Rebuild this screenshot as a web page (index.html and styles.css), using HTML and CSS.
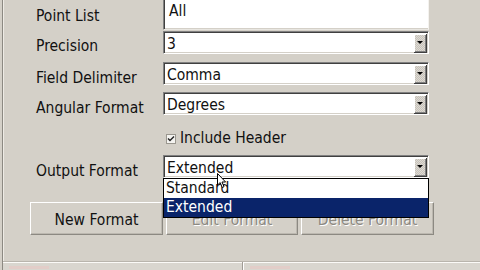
FILE: index.html
```html
<!DOCTYPE html>
<html lang="en">
  <head>
    <meta charset="UTF-8" />
    <meta name="viewport" content="width=device-width, initial-scale=1.0" />
    <title>Export Points</title>
    <link rel="stylesheet" href="styles.css">
  </head>
  <body>
    <div class="window">
      <div class="form">
        <div class="row row-first">
          <div class="label">Point List</div>
          <div class="textbox">All</div>
        </div>
        <div class="row row-precision">
          <div class="label">Precision</div>
          <div class="combo">
            <span class="combo-value">3</span>
            <span class="combo-btn"><span class="arrow"></span></span>
          </div>
        </div>
        <div class="row row-delim">
          <div class="label">Field Delimiter</div>
          <div class="combo">
            <span class="combo-value">Comma</span>
            <span class="combo-btn"><span class="arrow"></span></span>
          </div>
        </div>
        <div class="row row-angular">
          <div class="label">Angular Format</div>
          <div class="combo">
            <span class="combo-value">Degrees</span>
            <span class="combo-btn"><span class="arrow"></span></span>
          </div>
        </div>
        <div class="row row-check">
          <div class="label"></div>
          <label class="check">
            <span class="check-box">
              <svg width="8" height="8" viewBox="0 0 8 8"><path d="M1 3.5 L3 5.5 L7 1.5" fill="none" stroke="#222" stroke-width="1.4"/></svg>
            </span>
            Include Header
          </label>
        </div>
        <div class="row row-output">
          <div class="label">Output Format</div>
          <div class="combo combo-open">
            <span class="combo-value">Extended</span>
            <span class="combo-btn"><span class="arrow"></span></span>
            <ul class="dropdown">
              <li>Standard</li>
              <li class="selected">Extended</li>
            </ul>
            <svg class="cursor" width="10" height="16" viewBox="0 0 10 16">
              <path d="M0.5 0.5 L0.5 12 L3.2 9.6 L5.2 14.5 L7 13.7 L5 9 L8.6 9 Z" fill="#fff" stroke="#000" stroke-width="1"/>
            </svg>
          </div>
        </div>
      </div>

      <div class="buttons">
        <button class="btn">New Format</button>
        <button class="btn" disabled>Edit Format</button>
        <button class="btn" disabled>Delete Format</button>
      </div>

      <div class="statusbar">
        <div class="panel panel-left"><span class="mark"></span></div>
        <div class="panel panel-right"><span class="mark"></span></div>
      </div>
    </div>
  </body>
</html>
```

FILE: styles.css
```css
html,
body {
  margin: 0;
  height: 100%;
  background-color: #d4d0c8;
  overflow: hidden;
}
body {
  font-family: "DejaVu Sans Condensed", "DejaVu Sans", sans-serif;
  font-size: 15.5px;
  color: #111;
}
.window {
  margin-left: 2px;
  height: 270px;
  border-left: 1px solid #8c8982;
  box-shadow: inset 1px 0 #eeebe5;
  display: flex;
  flex-direction: column;
}
.form {
  padding-left: 33px;
  display: flex;
  flex-direction: column;
}
.row {
  display: flex;
  height: 23px;
}
.label {
  width: 127px;
  padding-top: 7px;
  line-height: 18px;
  white-space: nowrap;
}
.row-first {
  height: 30px;
}
.row-first .label {
  padding-top: 7px;
}
.row-precision {
  margin-top: 1px;
}
.row-precision .label {
  padding-top: 6px;
}
.row-delim {
  margin-top: 8px;
}
.row-angular {
  margin-top: 7px;
}
.row-check {
  margin-top: 13px;
  height: 20px;
}
.row-output {
  margin-top: 7px;
}
.textbox {
  box-sizing: border-box;
  width: 266px;
  height: 30px;
  background-color: #fff;
  border-left: 1px solid #808080;
  border-right: 1px solid #f4f2ee;
  border-bottom: 1px solid #e8e6e1;
  box-shadow: inset 1px 0 #404040, inset 0 -1px #d4d0c8;
  padding: 2px 5px;
  line-height: 18px;
}
.combo {
  position: relative;
  box-sizing: border-box;
  width: 266px;
  height: 23px;
  background-color: #fff;
  border: 1px solid;
  border-color: #808080 #fff #fff #808080;
  box-shadow: inset 1px 1px #404040, inset -1px -1px #d4d0c8;
  display: flex;
  align-items: center;
}
.combo-value {
  flex: 1;
  padding-left: 3px;
  padding-top: 3px;
  line-height: 18px;
}
.combo-btn {
  box-sizing: border-box;
  width: 13px;
  height: 19px;
  margin-right: 1px;
  margin-top: 1px;
  background-color: #d4d0c8;
  background-image: repeating-conic-gradient(#c6c2ba 0 25%, #dedad3 0 50%);
  background-size: 2px 2px;
  border-right: 1px solid #404040;
  border-bottom: 1px solid #404040;
  box-shadow: inset 1px 1px #fff, inset -1px -1px #808080;
  display: flex;
  align-items: center;
  justify-content: center;
}
.arrow {
  width: 0;
  height: 0;
  border-left: 3px solid transparent;
  border-right: 3px solid transparent;
  border-top: 3px solid #000;
}
.check {
  display: flex;
  align-items: center;
  gap: 4px;
  padding-left: 3px;
  line-height: 18px;
  white-space: nowrap;
}
.check-box {
  box-sizing: border-box;
  width: 10px;
  height: 10px;
  border: 1px solid #9a978f;
  background-color: #f4f3f0;
  display: flex;
  align-items: center;
  justify-content: center;
  margin-top: 2px;
}
.dropdown {
  position: absolute;
  left: -1px;
  top: 22px;
  width: 266px;
  box-sizing: border-box;
  margin: 0;
  padding: 0;
  list-style: none;
  background-color: #fff;
  border: 1px solid #000;
  z-index: 2;
}
.dropdown li {
  height: 19px;
  line-height: 19px;
  padding-left: 2px;
}
.dropdown li.selected {
  background-color: #0a246a;
  color: #fff;
}
.cursor {
  position: absolute;
  left: 53px;
  top: 17px;
  z-index: 3;
}
.buttons {
  display: flex;
  gap: 3px;
  padding-left: 27px;
  margin-top: 24px;
}
.btn {
  width: 133px;
  height: 33px;
  font-family: inherit;
  font-size: 15.5px;
  color: #111;
  background-color: #d4d0c8;
  border: 1px solid;
  border-color: #fff #8c8982 #8c8982 #fff;
  box-shadow: inset -1px -1px #bcb8b0;
  padding: 0;
  padding-top: 2px;
}
.btn:nth-child(2) {
  width: 132px;
}
.btn:disabled {
  color: #8c8982;
  text-shadow: 1px 1px #fff;
}
.statusbar {
  margin-top: auto;
  height: 8px;
  display: flex;
  border-top: 1px solid #b9b5ad;
  box-shadow: inset 0 1px #fbfaf7;
  background-color: #d9d6cf;
}
.panel {
  position: relative;
  height: 100%;
}
.panel-left {
  width: 239px;
  border-right: 1px solid #a09c95;
}
.panel-right {
  flex: 1;
  border-left: 1px solid #fff;
}
.mark {
  display: block;
  margin: 4px 0 0 6px;
  width: 40px;
  height: 3px;
  background-color: #e2cdc8;
}
```
